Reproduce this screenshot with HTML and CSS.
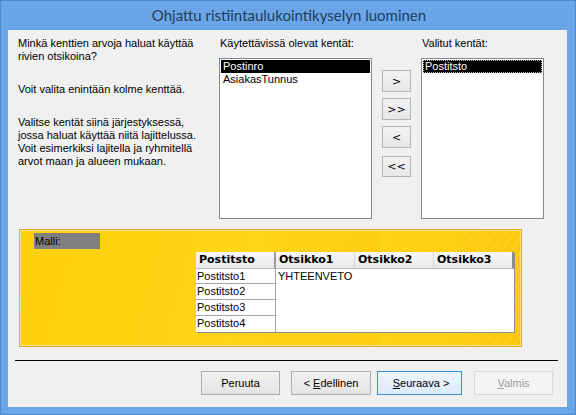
FILE: index.html
```html
<!DOCTYPE html>
<html lang="fi">
<head>
<meta charset="utf-8">
<title>Ohjattu ristiintaulukointikyselyn luominen</title>
<link rel="stylesheet" href="styles.css">
</head>
<body>
<div class="window">
  <div class="titlebar">Ohjattu ristiintaulukointikyselyn luominen</div>
  <div class="client">
    <div class="top">
      <div class="intro">
        <p class="p1">Minkä kenttien arvoja haluat käyttää<br>rivien otsikoina?</p>
        <p class="p2">Voit valita enintään kolme kenttää.</p>
        <p>Valitse kentät siinä järjestyksessä,<br>jossa haluat käyttää niitä lajittelussa.<br>Voit esimerkiksi lajitella ja ryhmitellä<br>arvot maan ja alueen mukaan.</p>
      </div>
      <div class="field-col avail">
        <div class="label">Käytettävissä olevat kentät:</div>
        <div class="listbox">
          <div class="item sel">Postinro</div>
          <div class="item">AsiakasTunnus</div>
        </div>
      </div>
      <div class="movers">
        <button class="mv">&gt;</button>
        <button class="mv">&gt;&gt;</button>
        <button class="mv">&lt;</button>
        <button class="mv last">&lt;&lt;</button>
      </div>
      <div class="field-col chosen">
        <div class="label">Valitut kentät:</div>
        <div class="listbox">
          <div class="item sel focus">Postitsto</div>
        </div>
      </div>
    </div>

    <div class="sample">
      <div class="malli">Malli:</div>
      <div class="grid">
        <div class="hd first">Postitsto</div>
        <div class="hd">Otsikko1</div>
        <div class="hd">Otsikko2</div>
        <div class="hd last">Otsikko3</div>
        <div class="rc r1">Postitsto1</div>
        <div class="data">YHTEENVETO</div>
        <div class="rc r2">Postitsto2</div>
        <div class="rc r3">Postitsto3</div>
        <div class="rc r4">Postitsto4</div>
      </div>
    </div>

    <div class="sep"></div>

    <div class="actions">
      <button class="btn cancel">Peruuta</button>
      <button class="btn prev">&lt; <u>E</u>dellinen</button>
      <button class="btn next">&nbsp;<u>S</u>euraava &gt;</button>
      <button class="btn finish" disabled><u>V</u>almis</button>
    </div>
  </div>
</div>
</body>
</html>
```

FILE: styles.css
```css
* { box-sizing: border-box; }

html, body {
  margin: 0;
  padding: 0;
}

body {
  width: 576px;
  height: 415px;
  overflow: hidden;
  font-family: "Liberation Sans", Arial, sans-serif;
  font-size: 11px;
  color: #000;
}

.window {
  width: 576px;
  height: 415px;
  background: #6aa6e7;
  border: 1px solid #4d8ad0;
}

.titlebar {
  height: 29px;
  line-height: 29px;
  text-align: center;
  font-family: Lato, "Open Sans", sans-serif;
  font-size: 15px;
  color: #213d5c;
  padding-left: 2px;
}

.client {
  margin-left: 7px;
  width: 559px;
  height: 377px;
  background: #f0f0f0;
  padding-top: 7px;
}

/* ---------- top section ---------- */
.top {
  display: flex;
  margin-left: 10px;
  height: 182px;
}

.intro {
  width: 201px;
  line-height: 13px;
}

.intro p {
  margin: 0 0 19px 0;
}

.intro .p1 { margin-bottom: 20px; }
.intro .p2 { margin-bottom: 20px; }

.field-col .label {
  height: 13px;
  line-height: 13px;
  margin-bottom: 8px;
  padding-left: 1px;
}

.avail { width: 153px; }
.chosen { width: 123px; margin-left: 10px; }

.listbox {
  height: 161px;
  background: #fff;
  border: 1px solid #828790;
  padding: 1px;
}

.item {
  height: 13px;
  line-height: 13px;
  padding-left: 2px;
  white-space: nowrap;
}

.item.sel {
  background: #000;
  color: #fff;
}

.item.focus {
  border: 1px dotted #bdbdbd;
  padding-left: 1px;
  line-height: 11px;
}

.movers {
  display: flex;
  flex-direction: column;
  margin-left: 10px;
  padding-top: 33px;
  width: 29px;
}

.mv {
  width: 29px;
  height: 22px;
  margin: 0 0 6px 0;
  padding: 0;
  font-family: "DejaVu Sans", sans-serif;
  font-size: 11px;
  color: #000;
  background: linear-gradient(#f2f2f2, #e6e6e6);
  border: 1px solid #b5b5b5;
}

.mv:nth-child(3) { margin-bottom: 8px; }
.mv.last { height: 21px; }

/* ---------- sample panel ---------- */
.sample {
  margin: 10px 0 0 11px;
  width: 503px;
  height: 118px;
  border: 1px solid #eaa43a;
  box-shadow: inset 0 0 0 1px #ffe48a;
  background:
    linear-gradient(90deg, rgba(255, 212, 20, 1) 0, rgba(255, 212, 20, 0) 100%) 360px 0 / 143px 100% no-repeat,
    repeating-linear-gradient(125deg, rgba(255, 232, 130, 0) 0 7px, rgba(255, 232, 130, 0.3) 7px 8px) 360px 0 / 143px 100% no-repeat,
    linear-gradient(105deg, #ffd00a 0%, #ffd518 45%, #fcc60e 100%);
  display: flex;
  flex-direction: column;
  align-items: flex-start;
}

.malli {
  margin: 3px 0 0 14px;
  width: 66px;
  height: 16px;
  line-height: 16px;
  background: #808080;
  color: #000;
  padding-left: 1px;
}

.grid {
  margin: 3px 0 0 176px;
  display: grid;
  grid-template-columns: 80px 79px 79px 80px;
  grid-template-rows: 17px 15px 16px 16px 16px;
  box-shadow: 1px 1px 0 #8c8c8c;
}

.hd {
  background: linear-gradient(#f7f7f7, #e9e9e9);
  font-family: "DejaVu Sans", sans-serif;
  font-weight: bold;
  font-size: 11px;
  line-height: 16px;
  padding-left: 3px;
  border-bottom: 1px solid #bdbdbd;
  border-right: 1px solid #d6d6d6;
}

.hd.first { border-right: 2px solid #9a9a9a; }
.hd.last { border-right: 2px solid #8c8c8c; }

.rc {
  grid-column: 1;
  background: #fff;
  border-right: 1px solid #a8a8a8;
  border-bottom: 1px solid #a8a8a8;
  padding-left: 1px;
  line-height: 15px;
}

.rc.r4 { border-bottom: 0; }

.r1 { grid-row: 2; }
.r2 { grid-row: 3; }
.r3 { grid-row: 4; }
.r4 { grid-row: 5; }

.data {
  grid-column: 2 / 5;
  grid-row: 2 / 6;
  background: #fff;
  padding-left: 2px;
  line-height: 15px;
}

/* ---------- bottom ---------- */
.sep {
  margin: 13px 0 0 7px;
  width: 543px;
  height: 1px;
  background: #000;
}

.actions {
  display: flex;
  margin: 10px 0 0 193px;
}

.btn {
  height: 24px;
  width: 79px;
  padding: 0;
  font-family: "Liberation Sans", Arial, sans-serif;
  font-size: 11px;
  color: #000;
  background: linear-gradient(#f1f1f1, #e4e4e4);
  border: 1px solid #adadad;
}

.btn.prev { margin-left: 11px; width: 80px; }
.btn.next {
  margin-left: 6px;
  width: 85px;
  border-color: #3c8fd6;
  background: linear-gradient(#edf5fc, #dcecfb);
}
.btn.finish {
  margin-left: 12px;
  color: #9e9e9e;
  background: #f4f4f4;
  border-color: #d9d9d9;
}
```
